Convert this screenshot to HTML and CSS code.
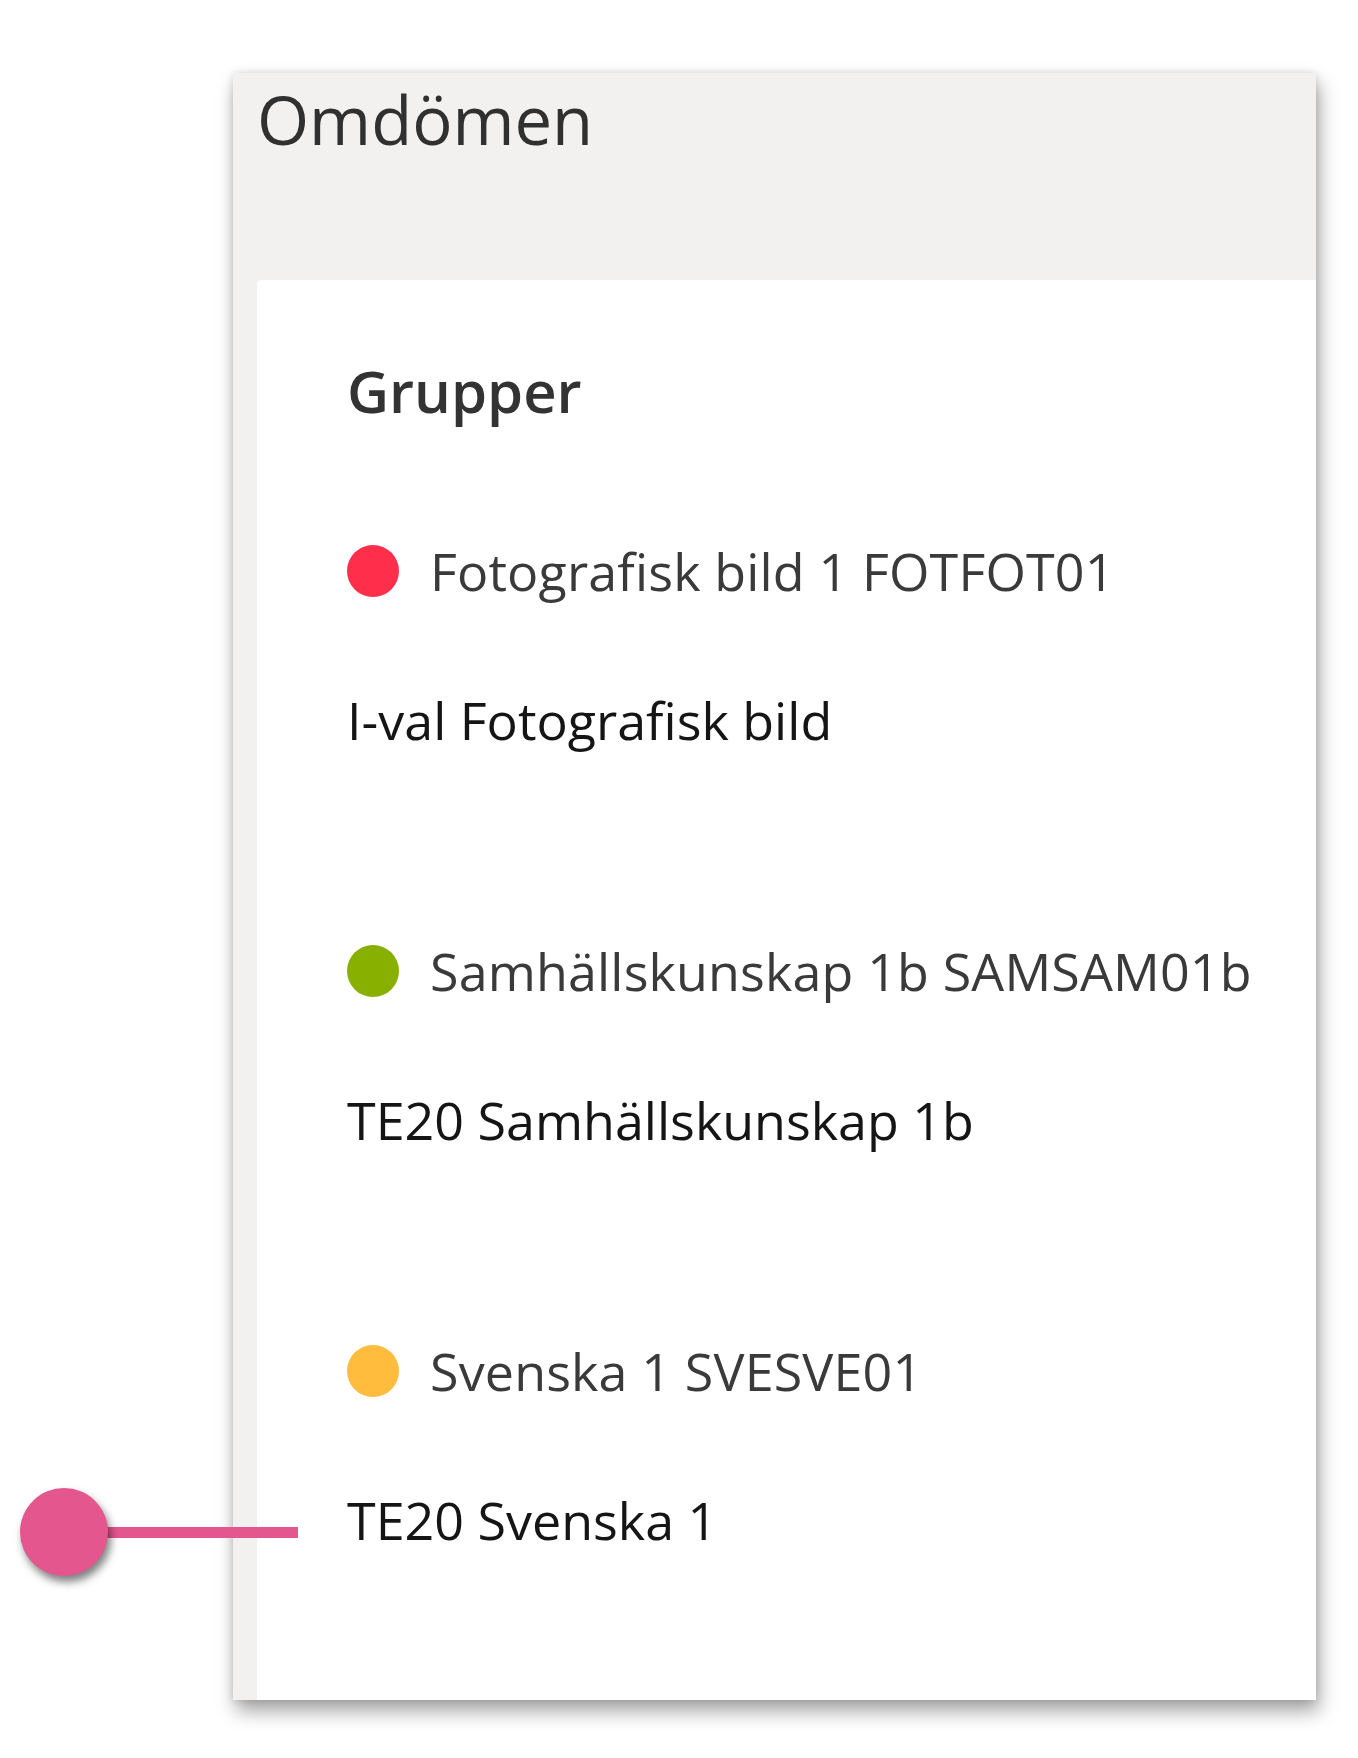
FILE: index.html
```html
<!DOCTYPE html>
<html lang="sv">
<head>
<meta charset="utf-8">
<title>Omdömen</title>
<link rel="stylesheet" href="styles.css">
</head>
<body>
<div class="panel">
  <header class="panel-head">
    <h1 class="panel-title">Omdömen</h1>
  </header>
  <section class="card">
    <h2 class="card-title">Grupper</h2>
    <div class="group">
      <div class="group-row">
        <span class="dot dot-red"></span>
        <span class="group-name">Fotografisk bild 1 FOTFOT01</span>
      </div>
      <div class="group-sub">I-val Fotografisk bild</div>
    </div>
    <div class="group">
      <div class="group-row">
        <span class="dot dot-green"></span>
        <span class="group-name">Samhällskunskap 1b SAMSAM01b</span>
      </div>
      <div class="group-sub">TE20 Samhällskunskap 1b</div>
    </div>
    <div class="group">
      <div class="group-row">
        <span class="dot dot-yellow"></span>
        <span class="group-name">Svenska 1 SVESVE01</span>
      </div>
      <div class="group-sub">TE20 Svenska 1</div>
    </div>
  </section>
</div>
<div class="marker">
  <span class="marker-pin"></span>
  <span class="marker-line"></span>
</div>
</body>
</html>
```

FILE: styles.css
```css
html, body {
  margin: 0;
  background: #ffffff;
}

body {
  padding: 73px 0 0 233px;
  font-family: "Open Sans", "Noto Sans", sans-serif;
  position: relative;
  width: 1358px;
  height: 1758px;
  box-sizing: border-box;
  overflow: hidden;
}

.panel {
  width: 1083px;
  height: 1627px;
  background: #f2f1f0;
  display: flex;
  flex-direction: column;
  box-shadow: 3px 11px 18px rgba(0, 0, 0, 0.36), 0 0 8px rgba(0, 0, 0, 0.12);
}

.panel-head {
  height: 207px;
  flex: none;
}

.panel-title {
  margin: 0;
  padding: 1px 0 0 24px;
  font-size: 67px;
  font-weight: 400;
  line-height: 90px;
  color: #303030;
}

.card {
  flex: 1;
  min-height: 0;
  overflow: hidden;
  margin-left: 24px;
  background: #ffffff;
  border-radius: 4px 0 0 0;
  padding: 72px 0 0 90px;
}

.card-title {
  margin: 0 0 106px;
  font-size: 58px;
  font-weight: 600;
  line-height: 78px;
  color: #333333;
}

.group {
  margin-bottom: 181px;
}

.group:last-child {
  margin-bottom: 0;
}

.group-row {
  display: flex;
  align-items: center;
  gap: 31px;
  height: 70px;
}

.dot {
  width: 52px;
  height: 52px;
  border-radius: 50%;
  flex: none;
}

.dot-red { background: #ff2e4a; }
.dot-green { background: #87b000; }
.dot-yellow { background: #ffbc3d; }

.group-name {
  font-size: 52px;
  line-height: 70px;
  letter-spacing: 0.15px;
  color: #3a3a3a;
}

.group-sub {
  margin-top: 79px;
  font-size: 52px;
  line-height: 70px;
  color: #151515;
}

.marker {
  position: absolute;
  left: 20px;
  top: 1488px;
  display: flex;
  align-items: center;
  z-index: 2;
}

.marker-pin {
  width: 88px;
  height: 88px;
  border-radius: 50%;
  background: #e4578e;
  box-shadow: 3px 6px 8px rgba(0, 0, 0, 0.5);
  position: relative;
  z-index: 1;
}

.marker-line {
  width: 192px;
  height: 11px;
  margin-left: -2px;
  background: #e4578e;
}
```
